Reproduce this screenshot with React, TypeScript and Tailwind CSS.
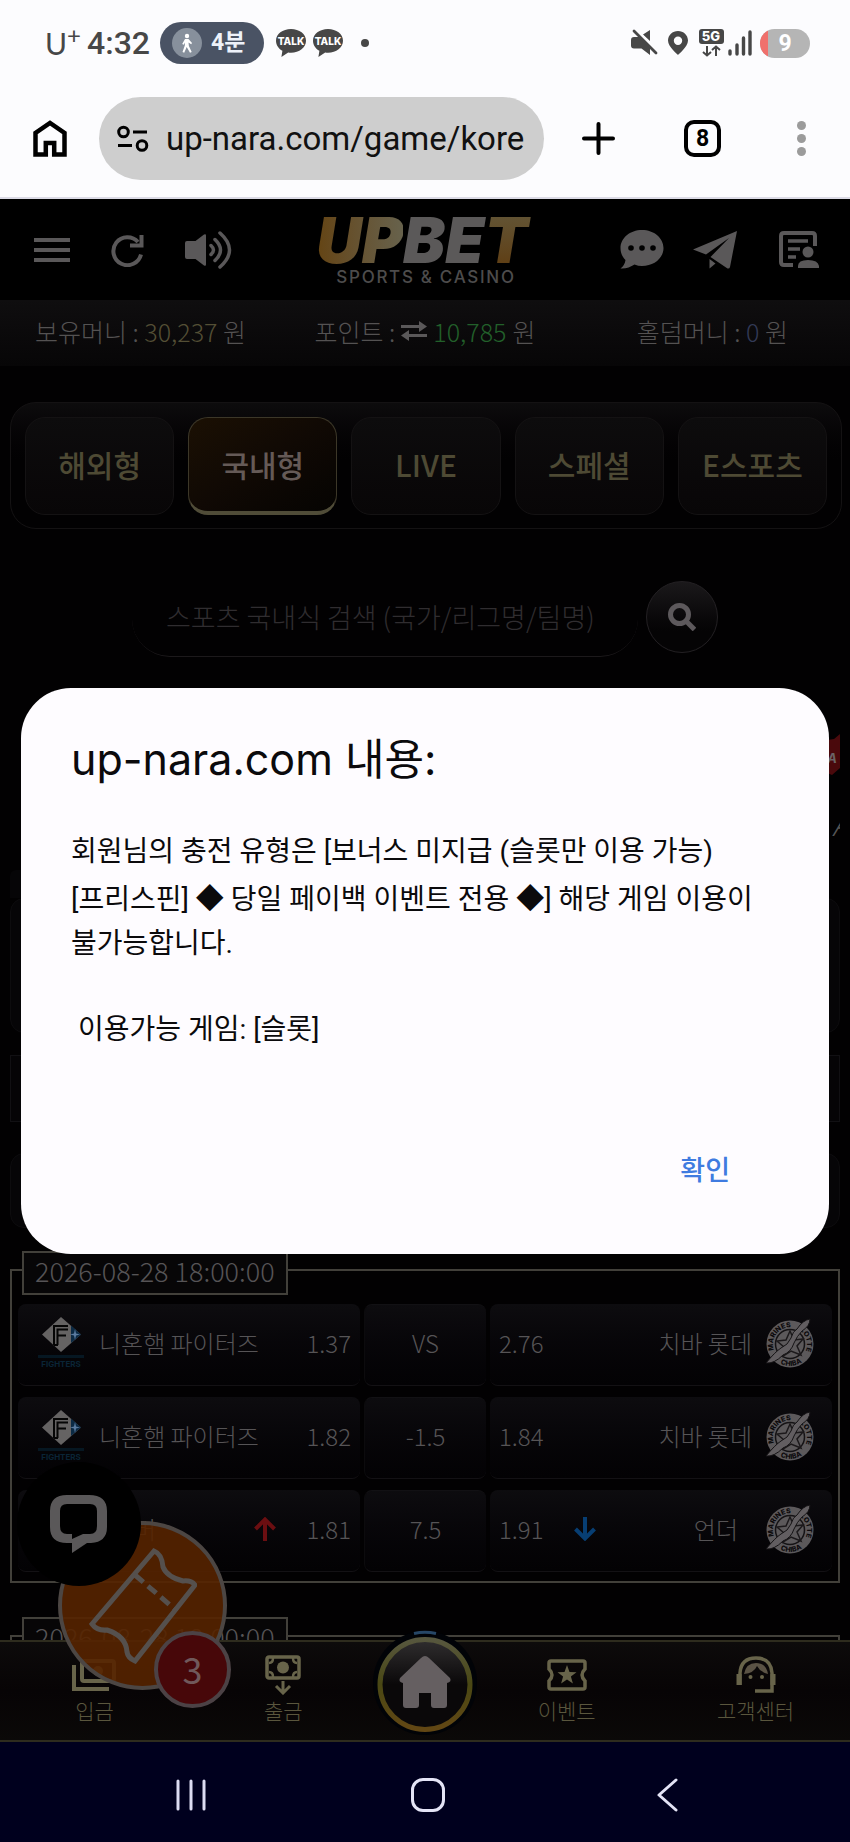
import type { ReactNode } from "react";

const TABS = ["해외형", "국내형", "LIVE", "스페셜", "E스포츠"];

type Row = {
  home: string;
  homeOdds: string;
  line: string;
  awayOdds: string;
  away: string;
  total?: boolean;
};

const ROWS: Row[] = [
  { home: "니혼햄 파이터즈", homeOdds: "1.37", line: "VS", awayOdds: "2.76", away: "치바 롯데" },
  { home: "니혼햄 파이터즈", homeOdds: "1.82", line: "-1.5", awayOdds: "1.84", away: "치바 롯데" },
  { home: "오버", homeOdds: "1.81", line: "7.5", awayOdds: "1.91", away: "언더", total: true },
];

function TalkBubble() {
  return (
    <svg width="30" height="28" viewBox="0 0 30 28">
      <path d="M15 0C6.700 0 0 5 0 11.800c0 4.200 2.500 7.900 6.400 10L5.400 28l6.800-4.500c.9.100 1.800.200 2.800.200 8.300 0 15-5.100 15-11.900S23.300 0 15 0Z" fill="#474747" />
      <text x="15" y="16" textAnchor="middle" fontSize="10" fontWeight="800" fill="#fff" fontFamily="Inter, sans-serif">TALK</text>
    </svg>
  );
}

function StatusBar() {
  return (
    <div className="flex h-[86px] shrink-0 items-center justify-between pl-[45px] pr-10 text-[#474747]">
      <div className="flex items-center">
        <span className="flex w-[42px] font-['Lato',sans-serif] text-[30px] leading-8">
          U<sup className="-top-1 text-[24px] leading-6">+</sup>
        </span>
        <span className="w-[73px] text-[32px] font-medium leading-8">4:32</span>
        <span className="flex h-[42px] w-[104px] items-center gap-[9px] rounded-full bg-[#4a5364] pl-3 text-[#eef2fa]">
          <svg width="30" height="30" viewBox="0 0 30 30">
            <circle cx="15" cy="15" r="15" fill="#87909c" />
            <circle cx="15" cy="8" r="2.200" fill="#fff" />
            <path d="M13 11h3.500l3.500 4-.8 1.200-2.700-1.800.4 3.600 2.800 6-1.700.700-3.300-5.700-2.500 5.700-1.700-.700 2.300-6.500.2-3-1.300 2.200-1.500-.6Z" fill="#fff" />
          </svg>
          <span className="text-[23px] font-bold leading-8">4분</span>
        </span>
        <span className="ml-3 flex gap-[7px]">
          <TalkBubble />
          <TalkBubble />
        </span>
        <span className="ml-[18px] size-2 rounded-full bg-[#474747]" />
      </div>
      <div className="flex items-center gap-2">
        <svg width="28" height="28" viewBox="0 0 28 28" fill="#474747">
          <path d="M1 11q0-3 3-3h5l11 9v9l-8.500-6.500H4q-3 0-3-3ZM13 5.500 20 1v11Z" />
          <path d="M6 1 28 23" stroke="#fcfcfe" strokeWidth="3" />
          <path d="M4 2 26 24" stroke="#474747" strokeWidth="2.800" strokeLinecap="round" />
        </svg>
        <svg className="ml-[2px]" width="20" height="26" viewBox="0 0 20 26">
          <path fillRule="evenodd" d="M10 1C4.500 1 0 5.200 0 10.600 0 17 10 25 10 25s10-8 10-14.400C20 5.200 15.500 1 10 1Zm0 5.500a4.200 4.200 0 1 1 0 8.400 4.200 4.200 0 0 1 0-8.400Z" fill="#474747" />
        </svg>
        <svg className="ml-[3px]" width="25" height="28" viewBox="0 0 25 28">
          <rect width="25" height="15" rx="3" fill="#474747" />
          <text x="12" y="12" textAnchor="middle" fontSize="13" fontWeight="800" fill="#fff" fontFamily="Inter, sans-serif">5G</text>
          <path d="M8 17v9M4 23l4 3.500 4-3.500M17 27v-9M13 21l4-3.500 4 3.500" fill="none" stroke="#474747" strokeWidth="2" />
        </svg>
        <svg className="-ml-1" width="24" height="26" viewBox="0 0 24 26" stroke="#474747" strokeWidth="3.400" strokeLinecap="round">
          <path d="M2 21v3M9 15v9M15.500 8v16M22 2v22" />
        </svg>
        <span className="flex h-[29px] w-[50px] overflow-hidden rounded-full bg-[#b5b5b5]">
          <span className="w-2 bg-[#f0706c]" />
          <span className="flex-1 pr-2 text-center text-[23px] font-bold leading-[29px] text-white">9</span>
        </span>
      </div>
    </div>
  );
}

function BrowserBar() {
  return (
    <div className="flex h-[113px] shrink-0 items-start border-b-2 border-[#dcdbe6] pl-[33px] pr-11 pt-[11px]">
      <div className="flex h-[83px] w-full items-center">
        <button aria-label="홈">
          <svg width="34" height="37" viewBox="0 0 34 37" fill="none" stroke="#000" strokeWidth="4.500">
            <path d="M2.500 34.500V13L17 3l14.500 10v21.500H21.200V23h-8.400v11.500Z" />
          </svg>
        </button>
        <label className="ml-8 flex h-full min-w-0 flex-1 items-center gap-[17px] rounded-full bg-[#cecece] pl-[18px]">
          <svg className="shrink-0" width="32" height="28" viewBox="0 0 32 28" fill="none" stroke="#000" strokeWidth="3">
            <circle cx="6.500" cy="7" r="4.800" />
            <path d="M16 7h14M1 20.500h14" />
            <circle cx="25" cy="20.500" r="4.800" />
          </svg>
          <input
            aria-label="주소"
            defaultValue="up-nara.com/game/kore"
            className="w-full min-w-0 bg-transparent text-[33px] leading-[44px] text-[#111] outline-none"
          />
        </label>
        <button aria-label="새 탭" className="ml-[38px]">
          <svg width="33" height="33" viewBox="0 0 33 33" stroke="#000" strokeWidth="4" strokeLinecap="round">
            <path d="M16.500 2v29M2 16.500h29" />
          </svg>
        </button>
        <button
          aria-label="탭 8개"
          className="ml-[69px] size-[37px] rounded-[10px] border-4 border-black text-center text-[23px] font-bold leading-[29px]"
        >
          8
        </button>
        <button aria-label="메뉴" className="ml-[76px] flex flex-col gap-1">
          <span className="size-[9px] rounded-full bg-[#9b9b9b]" />
          <span className="size-[9px] rounded-full bg-[#9b9b9b]" />
          <span className="size-[9px] rounded-full bg-[#9b9b9b]" />
        </button>
      </div>
    </div>
  );
}

function SiteHeader() {
  return (
    <header className="flex h-[101px] shrink-0 items-center justify-between bg-black pl-[34px] pr-[31px]">
      <div className="flex items-center gap-[41px]">
        <button aria-label="메뉴">
          <svg width="36" height="26" viewBox="0 0 36 26" stroke="#5a5859" strokeWidth="4">
            <path d="M0 3h36M0 13h36M0 23h36" />
          </svg>
        </button>
        <button aria-label="새로고침">
          <svg width="33" height="34" viewBox="0 0 33 34" fill="none" stroke="#5a5859" strokeWidth="4">
            <path d="M30 21.500A14 14 0 1 1 27 9" />
            <path d="M30.500 2v10.500H19" />
          </svg>
        </button>
        <button aria-label="소리">
          <svg width="47" height="38" viewBox="0 0 47 38" fill="none" stroke="#5a5859" strokeWidth="3.500" strokeLinecap="round">
            <path d="M2 10h8.500L19 3.500q2-1 2 1v29q0 2-2 1L10.500 28H2q-2 0-2-2V12q0-2 2-2Z" fill="#5a5859" stroke="none" />
            <path d="M26 14.500q5 4.500 0 9M30 8.500q11 10.500 0 21M35 2q19 17 0 34" />
          </svg>
        </button>
      </div>
      <a href="#" className="flex flex-col items-center pt-1 font-['Inter',sans-serif]">
        <span className="flex h-[47px] items-center text-[63px] font-black italic leading-[60px]">
          <span className="bg-linear-to-r from-[#644412] to-[#67624c] bg-clip-text text-transparent">UP</span>
          <span className="text-[#5b5959]">BE</span>
          <span className="bg-linear-to-b from-[#625637] to-[#5f3d10] bg-clip-text pr-2 text-transparent">T</span>
        </span>
        <span className="mt-1 text-[17px] font-medium leading-5 tracking-widest text-[#4d4c4c]">SPORTS &amp; CASINO</span>
      </a>
      <div className="flex items-center">
        <button aria-label="채팅">
          <svg width="44" height="39" viewBox="0 0 44 39">
            <path d="M22 0C10 0 .5 8 .5 18c0 5 2 9 5 12-.5 4-2.500 6.500-5 8.500 5 .500 10-1.500 14-4 2.500 1 5 1.500 7.500 1.500 12 0 21.500-8 21.500-18S34 0 22 0Z" fill="#5a5859" />
            <g fill="#000">
              <circle cx="11" cy="18" r="2.800" />
              <circle cx="22" cy="18" r="2.800" />
              <circle cx="33" cy="18" r="2.800" />
            </g>
          </svg>
        </button>
        <button aria-label="텔레그램" className="ml-[29px]">
          <svg width="44" height="38" viewBox="0 0 44 38" fill="#5a5859">
            <path d="M44 0 0 18.500l13 5L36 7 17.500 26l17 11.500q2 .500 2.500-1.500ZM16.500 28v9.500l6-5Z" />
          </svg>
        </button>
        <button aria-label="내 정보" className="ml-[42px]">
          <svg width="40" height="37" viewBox="0 0 40 37" fill="none" stroke="#5a5859" strokeWidth="4">
            <path d="M14 34H5q-3 0-3-3V5q0-3 3-3h28q3 0 3 3v10" />
            <path d="M9 10h20M9 18h12M9 26h8" strokeWidth="3.500" />
            <circle cx="29" cy="21" r="5.500" fill="#5a5859" stroke="none" />
            <path d="M19 37v-2q0-6 10-6t11 6v2Z" fill="#5a5859" stroke="none" />
          </svg>
        </button>
      </div>
    </header>
  );
}

function BalanceBar() {
  return (
    <div className="grid h-[66px] shrink-0 grid-cols-[1fr_auto_1fr] items-center bg-linear-to-b from-[#0f0e0f] to-[#070607] px-[35px] pb-1 text-[25px] font-light leading-8 text-[#545252]">
      <p>보유머니 : <span className="text-[#544f35]">30,237</span> 원</p>
      <p className="flex items-center gap-[6px]">
        포인트 :
        <svg width="26" height="20" viewBox="0 0 26 20" fill="#5a5859">
          <path d="M0 4h18V0l8 5.500-8 5.500V7H0ZM26 13H8V9l-8 5.500L8 20v-4h18Z" />
        </svg>
        <span className="text-[#22602a]">10,785</span> 원
      </p>
      <p className="pr-[27px] text-right">홀덤머니 : <span className="text-[#333a56]">0</span> 원</p>
    </div>
  );
}

function GameTabs() {
  return (
    <nav className="ml-[10px] mr-2 mt-9 flex gap-[14px] rounded-[26px] border border-[#141213] bg-linear-to-b from-[#0d0c0d] to-[#020102] to-45% px-[14px] pb-[13px] pt-[14px]">
      {TABS.map((tab) => (
        <button
          key={tab}
          className={`h-[98px] min-w-0 flex-1 rounded-[20px] text-[30px] font-medium ${
            tab === "국내형"
              ? "border border-b-4 border-[#3c3728] border-b-[#504c38] bg-linear-to-br from-[#1b1003] via-[#100904] to-[#060402] text-[#655a57]"
              : "border border-[#141213] bg-linear-to-b from-[#0d0c0d] to-[#080607] pb-1 text-[#4e4a34]"
          }`}
        >
          {tab}
        </button>
      ))}
    </nav>
  );
}

function SearchRow() {
  return (
    <form className="mx-auto mt-[52px] flex items-start gap-2" onSubmit={(e) => e.preventDefault()}>
      <input
        aria-label="경기 검색"
        placeholder="스포츠 국내식 검색 (국가/리그명/팀명)"
        className="h-[76px] w-[506px] rounded-full border-b border-[#1c191b] bg-transparent pb-1 pl-[34px] text-[27px] font-light text-[#4f4d4d] outline-none placeholder:text-[#302d30]"
      />
      <button
        aria-label="검색"
        className="flex size-[72px] items-center justify-center rounded-full border border-[#232023] bg-linear-to-b from-[#1b191b] to-[#050405] to-70%"
      >
        <svg width="28" height="28" viewBox="0 0 28 28" fill="none" stroke="#5d595c" strokeWidth="5">
          <circle cx="11.500" cy="11.500" r="9" />
          <path d="m18 18 8.500 8.500" />
        </svg>
      </button>
    </form>
  );
}

// League picker and filters, mostly hidden while the alert is open
function LeagueStrip() {
  return (
    <div className="mx-[10px] mt-[76px] flex flex-col">
      <div className="flex h-[137px] flex-col items-end">
        <svg width="36" height="42" viewBox="0 0 36 42">
          <path d="M2 10 30 6l6-5v34l-8 7L4 32Z" fill="#4a090c" />
          <text x="33" y="30" textAnchor="end" fontSize="13" fontWeight="700" fontStyle="italic" fill="#6a6365" fontFamily="Inter, sans-serif">MA</text>
        </svg>
        <span className="mt-7 w-[8px] overflow-hidden text-[30px] font-light italic leading-10 text-[#555]">A</span>
      </div>
      <div className="h-7 w-[120px] rounded-t-md bg-[#060507]" />
      <div className="h-[135px] rounded-[14px] border border-[#0d0c0e] bg-[#060507]" />
      <div className="mt-[22px] h-[67px] border border-[#111013] bg-[#050406]" />
      <div className="mt-[31px] h-[75px] rounded-[14px] border border-[#0d0c0e] bg-[#060507]" />
    </div>
  );
}

function FightersLogo() {
  return (
    <svg className="shrink-0" width="46" height="52" viewBox="0 0 46 52">
      <path d="M4 17.500 23 0l20 17.500L23 35Z" fill="#656363" />
      <path d="M33 8.500 43 17.500 33 26Z" fill="#0b2a44" />
      <path d="M16 28V9h14M19.500 28V12.500H30M19.500 18.500H28M16 28h4" fill="none" stroke="#050505" strokeWidth="2" />
      <path d="m37 12 1 4.500 4 1-4 1-1 4.500-1-4.500-4-1 4-1Z" fill="#5a7ba0" />
      <rect y="38" width="46" height="3" fill="#061722" />
      <text x="23" y="50" textAnchor="middle" fontSize="8" fontWeight="700" fill="#0a2536" fontFamily="Inter, sans-serif">FIGHTERS</text>
    </svg>
  );
}

function MarinesLogo({ id }: { id: string }) {
  return (
    <svg className="shrink-0" width="48" height="50" viewBox="0 0 48 50">
      <circle cx="24" cy="26" r="23.500" fill="#5c595b" />
      <circle cx="24" cy="26" r="14.500" fill="#5c595b" stroke="#151315" strokeWidth="1.500" />
      <path d="M24 13 28 22l9-1-6 7 4 9-10-4-8 5 1-9-7-6 9-1Z" fill="none" stroke="#1c191b" strokeWidth="1.500" />
      <path id={id} d="M8 32A17 17 0 1 1 38 36" fill="none" />
      <path id={`${id}-b`} d="M8 41A22 22 0 0 0 40 41" fill="none" />
      <g fontSize="7" fontWeight="800" fill="#0c0a0c" fontFamily="Inter, sans-serif">
        <text><textPath href={`#${id}`}>MARINES</textPath></text>
        <text><textPath href={`#${id}`} startOffset="62%">LOTTE</textPath></text>
        <text><textPath href={`#${id}-b`} startOffset="22%">CHIBA</textPath></text>
      </g>
      <path d="M44 1q-7 1-13 10-4 2-6 9-3 7-10 10-6 4-15 15 8 1 17-8 8-3 11-12 3-7 8-12Q44 8 44 1Z" fill="#625e61" stroke="#151315" />
    </svg>
  );
}

function Cell({ className, children }: { className: string; children: ReactNode }) {
  return (
    <button
      className={`flex h-[82px] min-w-0 items-center rounded-lg border-b border-[#131114] bg-linear-to-b from-[#0d0c0f] to-[#030204] pb-1 text-[24px] font-light leading-8 ${className}`}
    >
      {children}
    </button>
  );
}

function OddsRow({ row, index }: { row: Row; index: number }) {
  return (
    <div className="grid grid-cols-[1fr_122px_1fr] gap-1">
      <Cell className="pl-5 pr-[9px]">
        {row.total ? <span className="w-[46px] shrink-0" /> : <FightersLogo />}
        <span className={`flex-1 whitespace-nowrap text-left ${row.total ? "ml-7" : "ml-[15px]"}`}>{row.home}</span>
        {row.total && (
          <svg className="mr-[30px]" width="22" height="24" viewBox="0 0 22 24" fill="none" stroke="#6b0e11" strokeWidth="4">
            <path d="M11 24V3M1.500 12 11 2.500l9.500 9.500" />
          </svg>
        )}
        <span>{row.homeOdds}</span>
      </Cell>
      <Cell className="justify-center border-t border-l border-t-[#121114] border-l-[#0c0b0d]">{row.line}</Cell>
      <Cell className="pl-[9px] pr-[18px]">
        <span>{row.awayOdds}</span>
        {row.total && (
          <svg className="ml-[30px]" width="22" height="24" viewBox="0 0 22 24" fill="none" stroke="#073e73" strokeWidth="4">
            <path d="M11 0v21M1.500 12l9.500 9.500 9.500-9.500" />
          </svg>
        )}
        <span className={`flex-1 text-right ${row.total ? "mr-[28px]" : "mr-[14px]"}`}>{row.away}</span>
        <MarinesLogo id={`marines-${index}`} />
      </Cell>
    </div>
  );
}

function MatchGroup({ date, rows }: { date: string; rows: Row[] }) {
  return (
    <section className="mx-[10px] shrink-0 border-2 border-[#42403a] px-[6px] pb-[9px] text-[#565456]">
      <h2 className="-mt-5 ml-1 flex h-[44px] w-fit items-center border-2 border-[#42403a] bg-[#070607] px-[11px] pb-1 text-[27px] font-light leading-8">
        {date}
      </h2>
      <div className="mt-[9px] flex flex-col gap-[11px]">
        {rows.map((row, i) => (
          <OddsRow key={i} row={row} index={i} />
        ))}
      </div>
    </section>
  );
}

function NavItem({ label, children }: { label: string; children: ReactNode }) {
  return (
    <a href="#" className="flex flex-[2_1_0] flex-col items-center pt-3">
      <span className="flex h-[42px] items-center">{children}</span>
      <span className="mt-[2px] text-[21px] font-light leading-7">{label}</span>
    </a>
  );
}

function BottomNav() {
  return (
    <nav className="relative flex h-[102px] shrink-0 border-y-2 border-[#2e2c1e] bg-linear-to-b from-[#0d0b0b] via-[#070405] to-[#0b0908] text-[#5a563d]">
      <NavItem label="입금">
        <svg width="44" height="32" viewBox="0 0 44 32" fill="none" stroke="#68644a" strokeWidth="4">
          <path d="M2 6v24h35" />
          <rect x="10" y="2" width="32" height="20" rx="2" />
          <circle cx="26" cy="12" r="5" fill="#68644a" stroke="none" />
        </svg>
      </NavItem>
      <NavItem label="출금">
        <svg width="36" height="40" viewBox="0 0 36 40" fill="none" stroke="#68644a" strokeWidth="3.500">
          <rect x="2" y="2" width="32" height="21" rx="2" />
          <path d="M4 8q4 0 4-5M32 8q-4 0-4-5M4 17q4 0 4 5M32 17q-4 0-4 5" strokeWidth="2.500" />
          <circle cx="18" cy="12.500" r="6" fill="#68644a" stroke="none" />
          <path d="M18 26v11M11 31l7 7 7-7" strokeWidth="3" />
        </svg>
      </NavItem>
      <div className="flex min-w-0 flex-1 justify-center">
        <a href="#" aria-label="홈" className="-mt-3 shrink-0">
          <svg width="108" height="106" viewBox="0 0 108 106">
            <defs>
              <linearGradient id="ring" x1="0" y1="0" x2="0" y2="1">
                <stop offset="0" stopColor="#57573e" />
                <stop offset=".5" stopColor="#4a4814" />
                <stop offset="1" stopColor="#624714" />
              </linearGradient>
              <linearGradient id="gloss" x1="0" y1="0" x2="0" y2="1">
                <stop offset="0" stopColor="#302e2f" />
                <stop offset=".5" stopColor="#0a0809" />
              </linearGradient>
            </defs>
            <circle cx="54" cy="53" r="52" fill="#010307" />
            <path d="M43 3.500q11-2.500 22 0" stroke="#274766" strokeWidth="3" fill="none" />
            <circle cx="54" cy="54.500" r="45" fill="url(#gloss)" stroke="url(#ring)" strokeWidth="5" />
            <path d="M54 26q2 0 4 2l21 20q2 4-3 5v22q0 3-3 3H63q-3 0-3-3V63H48v12q0 3-3 3H35q-3 0-3-3V53q-5-1-3-5l21-20q2-2 4-2Z" fill="#655f61" />
          </svg>
        </a>
      </div>
      <NavItem label="이벤트">
        <svg width="40" height="32" viewBox="0 0 40 32">
          <path d="M4 2h32q2 0 2 2v6q-6 6 0 12v6q0 2-2 2H4q-2 0-2-2v-6q6-6 0-12V4q0-2 2-2Z" fill="none" stroke="#68644a" strokeWidth="3.500" />
          <path d="m20 6 2.500 7 7 .2-5.600 4.400 2 7-5.900-4-5.900 4 2-7-5.600-4.400 7-.2Z" fill="#68644a" />
        </svg>
      </NavItem>
      <NavItem label="고객센터">
        <svg width="40" height="38" viewBox="0 0 40 38" fill="none" stroke="#68644a" strokeWidth="3.500">
          <path d="M4 29V17Q5 2 20 2t16 15v18H19" />
          <path d="M3 18v11M37 18v11" strokeWidth="5" />
          <path d="M8 18q10-1 13-8 3 6 11 8-2-11-12-11T8 18Z" fill="#5b5345" stroke="none" />
          <circle cx="14.500" cy="21" r="2" fill="#68644a" stroke="none" />
          <circle cx="26" cy="21" r="2" fill="#68644a" stroke="none" />
        </svg>
      </NavItem>
    </nav>
  );
}

function FloatingButtons() {
  return (
    <>
      <button
        aria-label="쿠폰"
        className="absolute bottom-[52px] left-[58px] flex size-[169px] items-center justify-center rounded-full border-4 border-[#4c4643] bg-[#562300]/90"
      >
        <svg width="108" height="116" viewBox="0 0 108 116" fill="none" stroke="#55504d" strokeWidth="5">
          <path d="M65 3 3 76q5 7 15 6 19 6 20 22 1 6 8 9l60-76q-4-5-12-4-16-4-20-14-1-13-9-16Z" />
          <path d="m46 27 42 36" strokeDasharray="11 6" />
        </svg>
      </button>
      <span className="absolute bottom-[34px] left-[154px] size-[77px] rounded-full border-4 border-[#4c4245] bg-[#470709] text-center font-['Noto_Sans_CJK_KR',sans-serif] text-[36px] leading-[66px] text-[#70595b]">
        3
      </span>
      <button
        aria-label="상담 채팅"
        className="absolute bottom-[156px] left-[17px] flex size-[124px] items-center justify-center rounded-full bg-black"
      >
        <svg width="60" height="60" viewBox="0 0 60 60">
          <path fillRule="evenodd" d="M18 1h22q18 0 18 16v16q0 15-16 16h-4l-15 10V49h-5Q1 49 1 33V17Q1 1 18 1Zm0 9q-7 0-7 7v15q0 8 7 8h5v5l11-5h7q7 0 7-8V17q0-7-7-7Z" fill="#5a5859" />
        </svg>
      </button>
    </>
  );
}

function AlertDialog() {
  return (
    <div className="absolute inset-0 flex items-center justify-center px-[21px]">
      <div
        role="alertdialog"
        aria-labelledby="alert-title"
        className="flex w-full flex-col rounded-[50px] bg-[#fefcff] px-[50px] pb-[61px] pt-[45px] text-[#0b0a0c]"
      >
        <h1 id="alert-title" className="font-['Inter','Noto_Sans_CJK_KR',sans-serif] text-[43px] leading-[52px]">
          up-nara.com 내용:
        </h1>
        <div className="mt-[45px] text-[28px] leading-[44px]">
          <p>회원님의 충전 유형은 [보너스 미지급 (슬롯만 이용 가능)</p>
          <p className="pt-1">[프리스핀] ◆ 당일 페이백 이벤트 전용 ◆] 해당 게임 이용이</p>
          <p>불가능합니다.</p>
          <p className="mt-[42px] whitespace-pre"> 이용가능 게임: [슬롯]</p>
        </div>
        <button className="mr-[49px] mt-[97px] self-end text-[27px] font-medium leading-[44px] text-[#3f7be0]">확인</button>
      </div>
    </div>
  );
}

function SystemNav() {
  return (
    <div className="flex h-[100px] shrink-0 items-center justify-between bg-[#00001e] pl-[175px] pr-[172px] pt-[6px]">
      <button aria-label="최근 앱">
        <svg width="32" height="34" viewBox="0 0 32 34" stroke="#dcdcf2" strokeWidth="3" strokeLinecap="round">
          <path d="M3 3v28M16 3v28M29 3v28" />
        </svg>
      </button>
      <button aria-label="홈" className="mr-[7px] size-[34px] rounded-[12px] border-3 border-[#e4e4f6]" />
      <button aria-label="뒤로">
        <svg width="22" height="34" viewBox="0 0 22 34" fill="none" stroke="#e4e4f6" strokeWidth="3" strokeLinecap="round" strokeLinejoin="round">
          <path d="M20 2 3 17l17 15" />
        </svg>
      </button>
    </div>
  );
}

export default function App() {
  return (
    <div className="flex h-screen flex-col bg-[#fcfcfe] font-['Roboto','Noto_Sans_CJK_KR',sans-serif]">
      <StatusBar />
      <BrowserBar />
      <main className="relative flex min-h-0 flex-1 flex-col overflow-hidden bg-[#020102]">
        <div className="flex min-h-0 flex-1 flex-col overflow-hidden font-['Noto_Sans_CJK_KR',sans-serif]">
          <SiteHeader />
          <BalanceBar />
          <GameTabs />
          <SearchRow />
          <LeagueStrip />
          <div className="mt-[41px] flex flex-col gap-[52px]">
            <MatchGroup date="2026-08-28 18:00:00" rows={ROWS} />
            <MatchGroup date="2026-08-28 18:00:00" rows={ROWS.slice(0, 1)} />
          </div>
        </div>
        <BottomNav />
        <FloatingButtons />
        <AlertDialog />
      </main>
      <SystemNav />
    </div>
  );
}
